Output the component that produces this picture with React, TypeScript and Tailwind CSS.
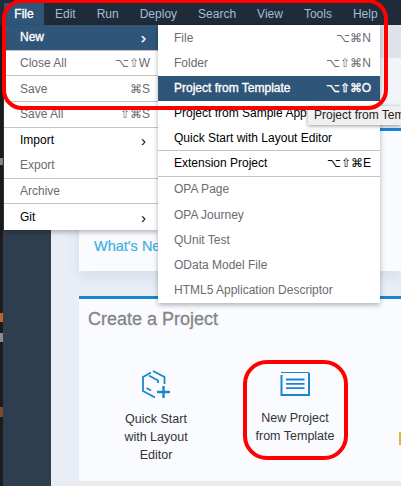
import React from 'react'

interface Item {
  label: string
  shortcut?: string
  arrow?: boolean
  active?: boolean
  muted?: boolean
  sep?: boolean // line under the row
}

const menuBar = ['Edit', 'Run', 'Deploy', 'Search', 'View', 'Tools', 'Help']

const fileMenu: Item[] = [
  { label: 'New', arrow: true, active: true, sep: true },
  { label: 'Close All', shortcut: '⌥⇧W', muted: true, sep: true },
  { label: 'Save', shortcut: '⌘S', muted: true, sep: true },
  { label: 'Save All', shortcut: '⇧⌘S', muted: true, sep: true },
  { label: 'Import', arrow: true },
  { label: 'Export', muted: true, sep: true },
  { label: 'Archive', muted: true, sep: true },
  { label: 'Git', arrow: true },
]

const newMenu: Item[] = [
  { label: 'File', shortcut: '⌥⌘N', muted: true },
  { label: 'Folder', shortcut: '⌥⇧⌘N', muted: true },
  { label: 'Project from Template', shortcut: '⌥⇧⌘O', active: true },
  { label: 'Project from Sample App' },
  { label: 'Quick Start with Layout Editor', sep: true },
  { label: 'Extension Project', shortcut: '⌥⇧⌘E', sep: true },
  { label: 'OPA Page', muted: true },
  { label: 'OPA Journey', muted: true },
  { label: 'QUnit Test', muted: true },
  { label: 'OData Model File', muted: true },
  { label: 'HTML5 Application Descriptor', muted: true },
]

function Row({ item, pad }: { item: Item; pad: string }) {
  const color = item.active
    ? 'bg-[#2f5579] text-white [-webkit-text-stroke:0.35px_white]'
    : item.muted
      ? 'text-[#6c6a70]'
      : 'text-black'
  return (
    <div
      className={`flex items-center justify-between whitespace-nowrap ${pad} ${color} ${
        item.sep ? 'border-b border-[#c4c4c4]' : ''
      }`}
    >
      <span>{item.label}</span>
      {item.shortcut && <span>{item.shortcut}</span>}
      {item.arrow && <span className="mr-[4px] text-[15px] leading-none">›</span>}
    </div>
  )
}

function QuickStartIcon() {
  return (
    <svg width="29" height="29" viewBox="0 0 29 29" fill="none" stroke="#1a86d0" strokeWidth="1.8">
      <path d="M9 2.5 L1 7 V21 L13 27.5" />
      <path d="M11 1 L22.5 7 V14" />
      <path d="M7 5.5 L16 10.5 V13" />
      <path d="M4.5 18 L9 20.5" />
      <path d="M21.5 16 V28 M15 22 H28" strokeWidth="2.4" />
    </svg>
  )
}

function TemplateIcon() {
  return (
    <svg width="30" height="24" viewBox="0 0 30 24" fill="none" stroke="#1a86d0">
      <path d="M1 0.5 H29" strokeWidth="1" />
      <path d="M29 1 V23 H1.5 V3" strokeWidth="2" />
      <path d="M6 7.5 H24.5 M6 11.8 H24.5 M6 16.2 H24.5" strokeWidth="1.8" />
    </svg>
  )
}

export default function App() {
  return (
    <div className="relative flex h-[486px] w-[401px] flex-col overflow-hidden bg-[#1c1c1c] font-['Liberation_Sans',sans-serif] text-[12px]">
      {/* top bar */}
      <div className="flex h-[25px] items-end bg-[#1f2b38] pl-[4px] text-[#a3bcd8]">
        <div className="flex h-[22px] w-[40px] items-center justify-center bg-[#2f5579] text-white [-webkit-text-stroke:0.35px_white]">File</div>
        <div className="ml-[11px] flex h-[22px] items-center gap-[21px]">
          {menuBar.map(m => (
            <span key={m}>{m}</span>
          ))}
        </div>
      </div>

      <div className="flex flex-1">
        {/* bits of the desktop behind the window */}
        <svg className="w-[3px] shrink-0" width="3" height="461" viewBox="0 0 3 461">
          <rect y="133" width="3" height="7" fill="#8a8a8a" />
          <rect y="288" width="3" height="9" fill="#c0622a" />
          <rect y="308" width="3" height="9" fill="#8a8a8a" />
          <rect y="382" width="3" height="10" fill="#7a4a30" />
        </svg>
        <div className="w-[48px] shrink-0 bg-[#2f3e4e]" />
        <div className="flex min-w-0 flex-1 flex-col bg-[#e9eef6]">
          <div className="h-[33px] bg-[#dfe3e9]" />
          <div className="h-[70px] bg-[#f1f4f9]" />

          {/* What's New card */}
          <div className="ml-[28px] flex h-[143px] flex-col justify-end border-t-[3px] border-[#1a86d6] bg-[#f9fbfe] pb-[16px] pl-[15px] shadow-[0_6px_14px_rgba(60,80,110,0.1)]">
            <span className="text-[14.5px] leading-[18px] text-[#3fb0e0] [-webkit-text-stroke:0.2px_#3fb0e0]">What's New</span>
          </div>

          {/* Create a Project card */}
          <div className="ml-[28px] mt-[25px] h-[185px] overflow-hidden border-t-[3px] border-[#1a86d6] bg-[#f9fbfe] pl-[9px] pt-[9px]">
            <h2 className="text-[18px] leading-[22px] text-[#858585] [-webkit-text-stroke:0.3px_#858585]">Create a Project</h2>
            <div className="mt-[40px] flex text-center text-[12.5px] leading-[18px] text-[#333]">
              <div className="ml-[14px] flex w-[108px] shrink-0 flex-col items-center">
                <QuickStartIcon />
                <p className="mt-[11px]">Quick Start<br />with Layout<br />Editor</p>
              </div>
              <div className="ml-[30px] flex w-[110px] shrink-0 flex-col items-center pt-[2px]">
                <TemplateIcon />
                <p className="mt-[13px]">New Project<br />from Template</p>
              </div>
              <div className="ml-[49px] mt-[62px] h-[13px] w-[3px] shrink-0 bg-[#f0b040]" />
            </div>
          </div>
          <div className="flex-1 bg-[#e9ebef]" />
        </div>
      </div>

      {/* File menu */}
      <div className="absolute left-[4px] top-[25px] grid h-[205px] w-[154px] auto-rows-fr bg-white shadow-[0_2px_5px_rgba(0,0,0,0.3)]">
        {fileMenu.map(item => (
          <Row key={item.label} item={item} pad="pl-[16px] pr-[8px]" />
        ))}
      </div>

      {/* New submenu */}
      <div className="absolute left-[158px] top-[25px] grid h-[278px] w-[222px] auto-rows-fr bg-white shadow-[0_2px_5px_rgba(0,0,0,0.3)]">
        {newMenu.map(item => (
          <Row key={item.label} item={item} pad="pl-[16px] pr-[9px]" />
        ))}
      </div>

      {/* tooltip, runs off the window */}
      <div className="absolute left-[308px] top-[106px] h-[19px] w-[93px] overflow-hidden whitespace-nowrap bg-[#f0f0f0] pl-[6px] text-[12px] leading-[19px] text-[#222] shadow-[0_1px_4px_rgba(0,0,0,0.4)]">
        Project from Tem
      </div>

      {/* red call-outs */}
      <div className="pointer-events-none absolute left-[2px] top-[-1px] h-[111px] w-[386px] rounded-[20px] border-4 border-[#fe0000]" />
      <div className="pointer-events-none absolute left-[243px] top-[360px] h-[100px] w-[105px] rounded-[24px] border-4 border-[#fe0000]" />
    </div>
  )
}
